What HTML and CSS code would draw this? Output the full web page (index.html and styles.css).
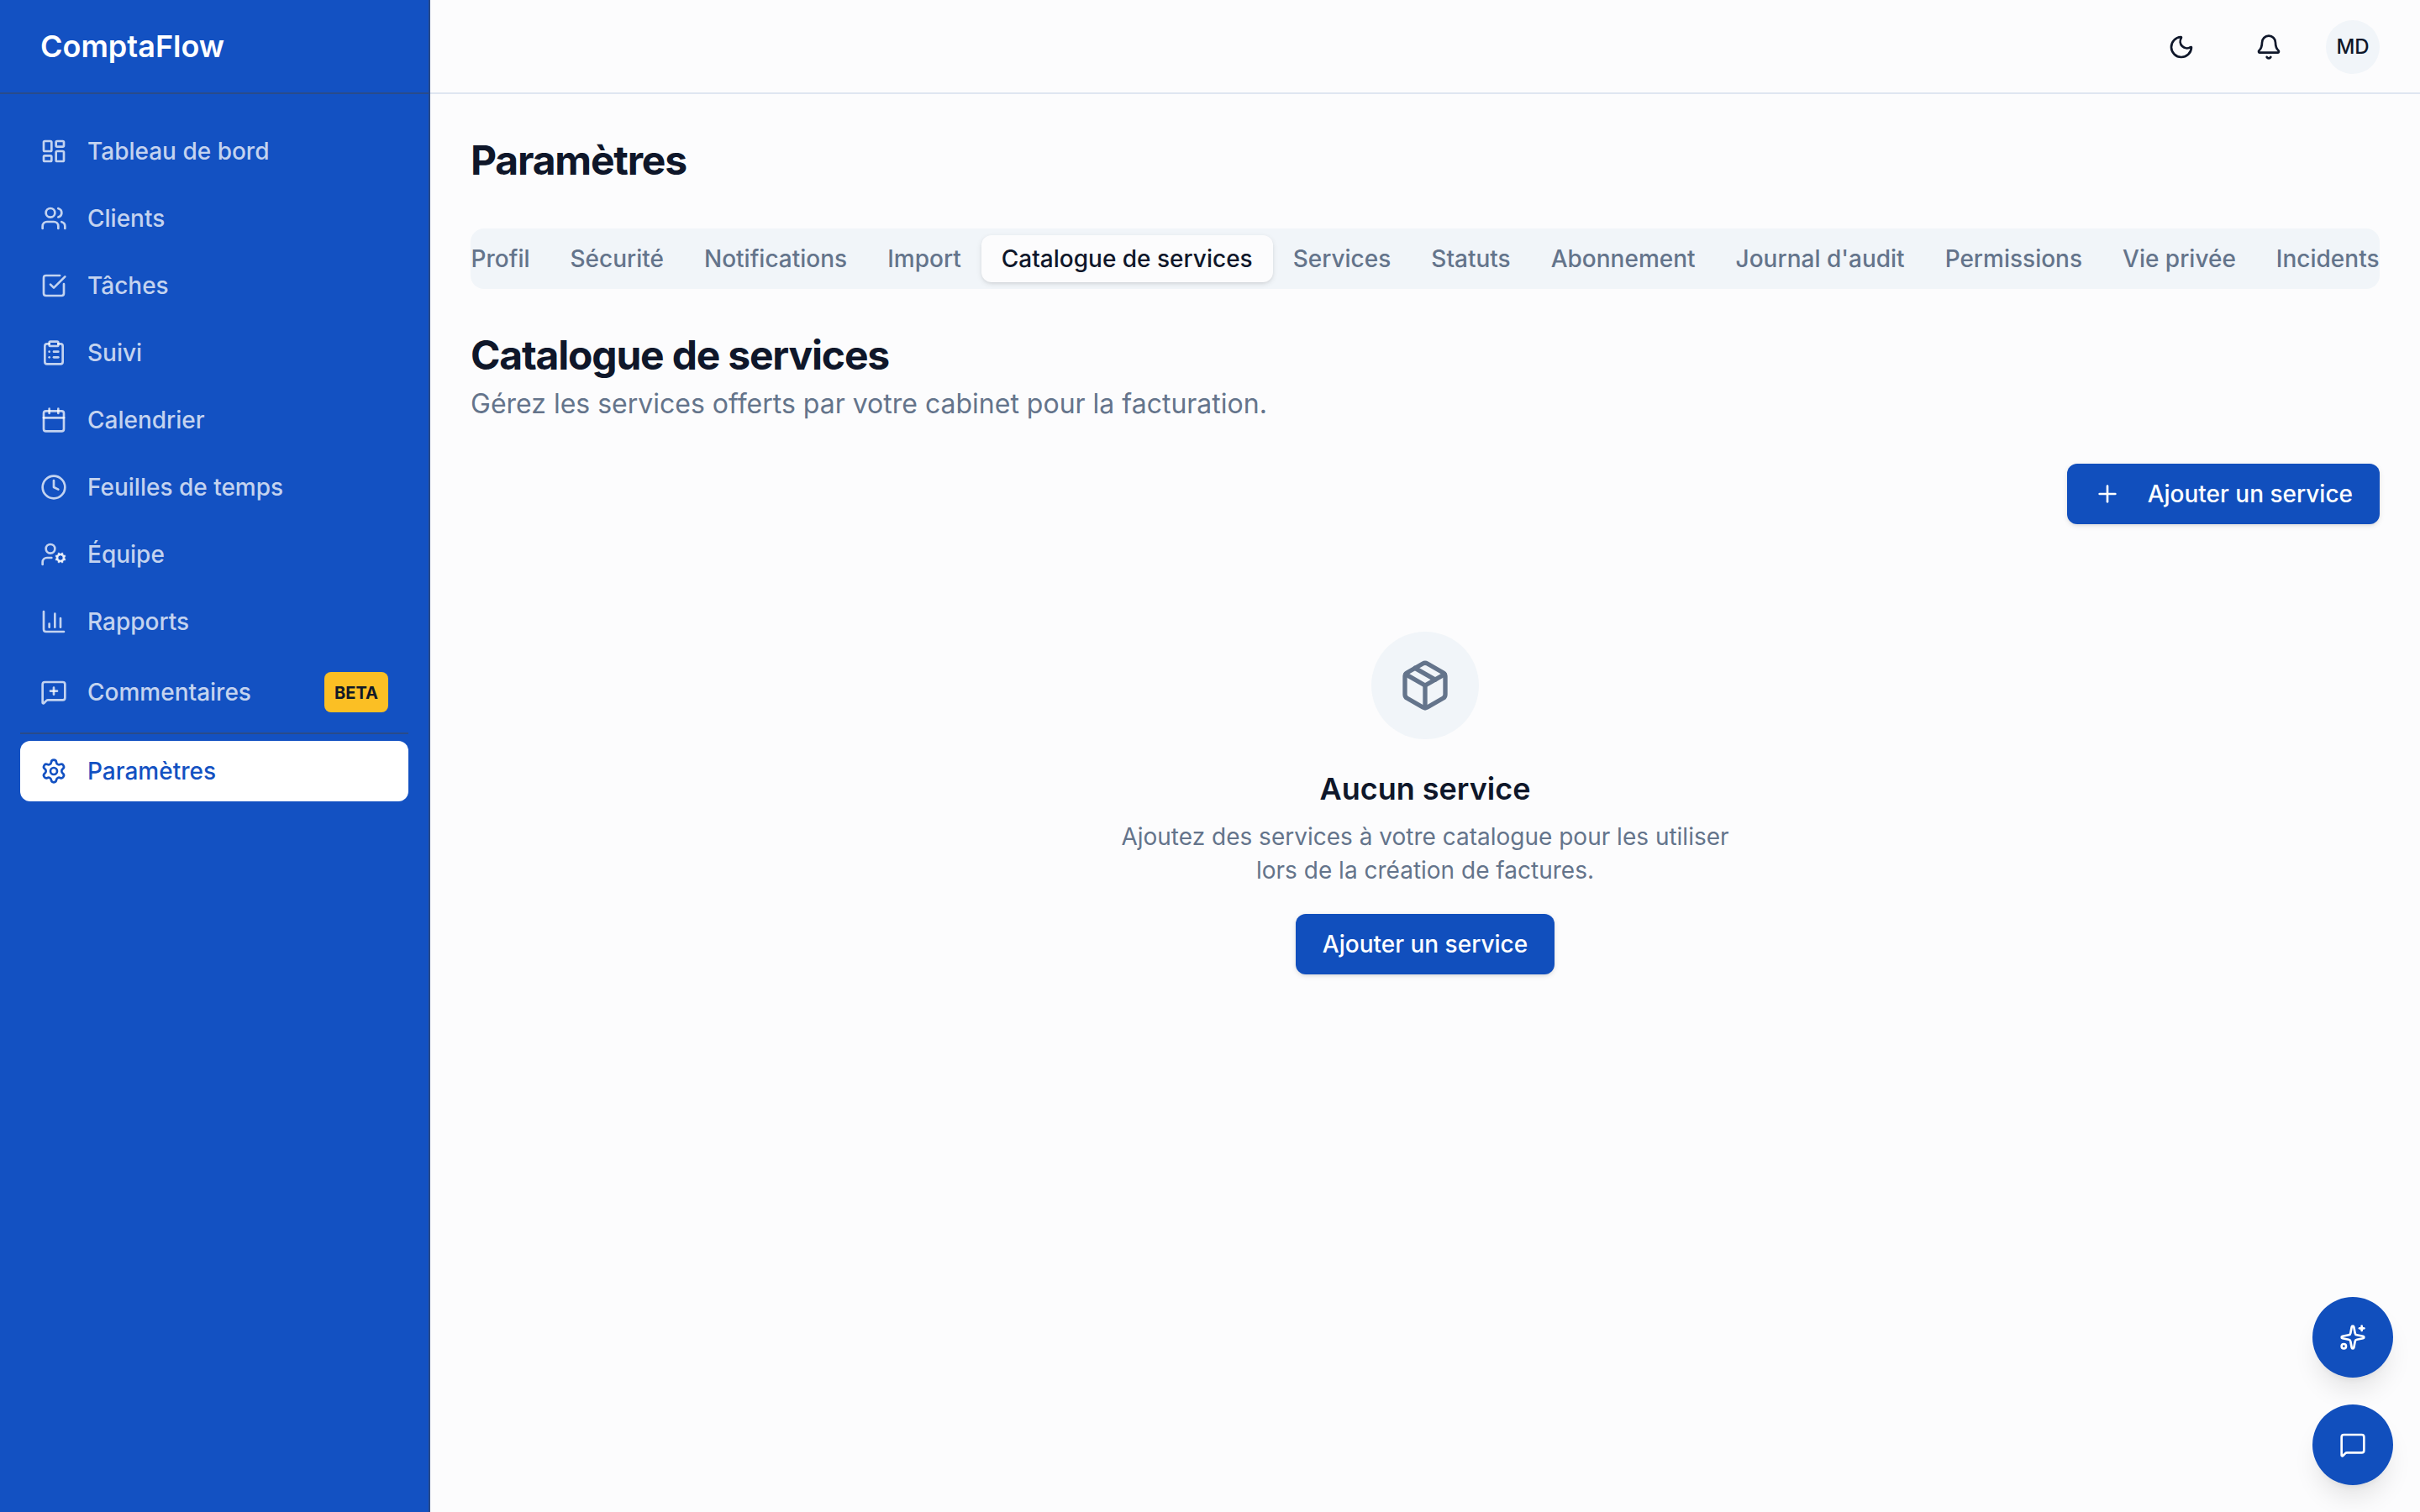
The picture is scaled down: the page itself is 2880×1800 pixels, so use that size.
FILE: index.html
```html
<!DOCTYPE html>
<html lang="fr">
<head>
  <meta charset="UTF-8" />
  <meta name="viewport" content="width=device-width, initial-scale=1" />
  <title>Paramètres - ComptaFlow</title>
  <link rel="stylesheet" href="styles.css">
</head>
<body>
  <div class="app">
    <aside class="sidebar">
      <div class="brand">ComptaFlow</div>
      <nav class="nav">
        <a class="nav-item">
          <svg class="icon" viewBox="0 0 24 24"><rect width="7" height="9" x="3" y="3" rx="1"/><rect width="7" height="5" x="14" y="3" rx="1"/><rect width="7" height="9" x="14" y="12" rx="1"/><rect width="7" height="5" x="3" y="16" rx="1"/></svg>
          <span>Tableau de bord</span>
        </a>
        <a class="nav-item">
          <svg class="icon" viewBox="0 0 24 24"><path d="M16 21v-2a4 4 0 0 0-4-4H6a4 4 0 0 0-4 4v2"/><path d="M16 3.128a4 4 0 0 1 0 7.744"/><path d="M22 21v-2a4 4 0 0 0-3-3.87"/><circle cx="9" cy="7" r="4"/></svg>
          <span>Clients</span>
        </a>
        <a class="nav-item">
          <svg class="icon" viewBox="0 0 24 24"><path d="M21 10.656V19a2 2 0 0 1-2 2H5a2 2 0 0 1-2-2V5a2 2 0 0 1 2-2h12.344"/><path d="m9 11 3 3L22 4"/></svg>
          <span>Tâches</span>
        </a>
        <a class="nav-item">
          <svg class="icon" viewBox="0 0 24 24"><rect width="8" height="4" x="8" y="2" rx="1"/><path d="M16 4h2a2 2 0 0 1 2 2v14a2 2 0 0 1-2 2H6a2 2 0 0 1-2-2V6a2 2 0 0 1 2-2h2"/><path d="M12 11h4"/><path d="M12 16h4"/><path d="M8 11h.01"/><path d="M8 16h.01"/></svg>
          <span>Suivi</span>
        </a>
        <a class="nav-item">
          <svg class="icon" viewBox="0 0 24 24"><path d="M8 2v4"/><path d="M16 2v4"/><rect width="18" height="18" x="3" y="4" rx="2"/><path d="M3 10h18"/></svg>
          <span>Calendrier</span>
        </a>
        <a class="nav-item">
          <svg class="icon" viewBox="0 0 24 24"><path d="M12 6v6l4 2"/><circle cx="12" cy="12" r="10"/></svg>
          <span>Feuilles de temps</span>
        </a>
        <a class="nav-item">
          <svg class="icon" viewBox="0 0 24 24"><path d="M10 15H6a4 4 0 0 0-4 4v2"/><path d="m14.305 16.53.923-.382"/><path d="m15.228 13.852-.923-.383"/><path d="m16.852 12.228-.383-.923"/><path d="m16.852 17.772-.383.924"/><path d="m19.148 12.228.383-.923"/><path d="m19.53 18.696-.382-.924"/><path d="m20.772 13.852.924-.383"/><path d="m20.772 16.148.924.383"/><circle cx="18" cy="15" r="3"/><circle cx="9" cy="7" r="4"/></svg>
          <span>Équipe</span>
        </a>
        <a class="nav-item">
          <svg class="icon" viewBox="0 0 24 24"><path d="M3 3v16a2 2 0 0 0 2 2h16"/><path d="M18 17V9"/><path d="M13 17V5"/><path d="M8 17v-3"/></svg>
          <span>Rapports</span>
        </a>
        <a class="nav-item">
          <svg class="icon" viewBox="0 0 24 24"><path d="M22 17a2 2 0 0 1-2 2H6.828a2 2 0 0 0-1.414.586l-2.202 2.202A.71.71 0 0 1 2 21.286V5a2 2 0 0 1 2-2h16a2 2 0 0 1 2 2z"/><path d="M12 8v6"/><path d="M9 11h6"/></svg>
          <span>Commentaires</span>
          <span class="badge">BETA</span>
        </a>
        <div class="nav-footer">
          <a class="nav-item active">
            <svg class="icon" viewBox="0 0 24 24"><path d="M9.671 4.136a2.34 2.34 0 0 1 4.659 0 2.34 2.34 0 0 0 3.319 1.915 2.34 2.34 0 0 1 2.33 4.033 2.34 2.34 0 0 0 0 3.831 2.34 2.34 0 0 1-2.33 4.033 2.34 2.34 0 0 0-3.319 1.915 2.34 2.34 0 0 1-4.659 0 2.34 2.34 0 0 0-3.32-1.915 2.34 2.34 0 0 1-2.33-4.033 2.34 2.34 0 0 0 0-3.831A2.34 2.34 0 0 1 6.35 6.051a2.34 2.34 0 0 0 3.319-1.915"/><circle cx="12" cy="12" r="3"/></svg>
            <span>Paramètres</span>
          </a>
        </div>
      </nav>
    </aside>

    <div class="page">
      <header class="topbar">
        <button class="icon-btn" aria-label="Thème">
          <svg class="icon" viewBox="0 0 24 24"><path d="M20.985 12.486a9 9 0 1 1-9.473-9.472c.405-.022.617.46.402.803a6 6 0 0 0 8.268 8.268c.344-.215.825-.004.803.401"/></svg>
        </button>
        <button class="icon-btn" aria-label="Notifications">
          <svg class="icon" viewBox="0 0 24 24"><path d="M10.268 21a2 2 0 0 0 3.464 0"/><path d="M3.262 15.326A1 1 0 0 0 4 17h16a1 1 0 0 0 .74-1.673C19.41 13.956 18 12.499 18 8A6 6 0 0 0 6 8c0 4.499-1.411 5.956-2.738 7.326"/></svg>
        </button>
        <div class="avatar">MD</div>
      </header>

      <main class="content">
        <h1>Paramètres</h1>

        <div class="tabs">
          <button class="tab">Profil</button>
          <button class="tab">Sécurité</button>
          <button class="tab">Notifications</button>
          <button class="tab">Import</button>
          <button class="tab active">Catalogue de services</button>
          <button class="tab">Services</button>
          <button class="tab">Statuts</button>
          <button class="tab">Abonnement</button>
          <button class="tab">Journal d'audit</button>
          <button class="tab">Permissions</button>
          <button class="tab">Vie privée</button>
          <button class="tab">Incidents</button>
        </div>

        <section>
          <h2>Catalogue de services</h2>
          <p class="subtitle">Gérez les services offerts par votre cabinet pour la facturation.</p>
        </section>

        <div class="actions">
          <button class="btn">
            <svg class="icon" viewBox="0 0 24 24"><path d="M5 12h14"/><path d="M12 5v14"/></svg>
            Ajouter un service
          </button>
        </div>

        <div class="empty">
          <div class="empty-icon">
            <svg class="icon" viewBox="0 0 24 24"><path d="M11 21.73a2 2 0 0 0 2 0l7-4A2 2 0 0 0 21 16V8a2 2 0 0 0-1-1.73l-7-4a2 2 0 0 0-2 0l-7 4A2 2 0 0 0 3 8v8a2 2 0 0 0 1 1.73z"/><path d="M12 22V12"/><path d="M3.29 7 12 12l8.71-5"/><path d="m7.5 4.27 9 5.15"/></svg>
          </div>
          <h3>Aucun service</h3>
          <p>Ajoutez des services à votre catalogue pour les utiliser lors de la création de factures.</p>
          <button class="btn">Ajouter un service</button>
        </div>
      </main>
    </div>
  </div>

  <!-- Floating actions -->
  <div class="fabs">
    <button class="fab" aria-label="Assistant">
      <svg class="icon" viewBox="0 0 24 24"><path d="M11.017 2.814a1 1 0 0 1 1.966 0l1.051 5.558a2 2 0 0 0 1.594 1.594l5.558 1.051a1 1 0 0 1 0 1.966l-5.558 1.051a2 2 0 0 0-1.594 1.594l-1.051 5.558a1 1 0 0 1-1.966 0l-1.051-5.558a2 2 0 0 0-1.594-1.594l-5.558-1.051a1 1 0 0 1 0-1.966l5.558-1.051a2 2 0 0 0 1.594-1.594z"/><path d="M20 2v4"/><path d="M22 4h-4"/><circle cx="4" cy="20" r="2"/></svg>
    </button>
    <button class="fab" aria-label="Messages">
      <svg class="icon" viewBox="0 0 24 24"><path d="M22 17a2 2 0 0 1-2 2H6.828a2 2 0 0 0-1.414.586l-2.202 2.202A.71.71 0 0 1 2 21.286V5a2 2 0 0 1 2-2h16a2 2 0 0 1 2 2z"/></svg>
    </button>
  </div>
</body>
</html>
```
FILE: styles.css
```css
* {
  margin: 0;
  padding: 0;
  box-sizing: border-box;
}
:root {
  --primary: #114fbd;
  --sidebar: #1351c2;
  --sidebar-border: #294b8a;
  --background: #fcfcfd;
  --foreground: #0f172a;
  --muted: #f1f5f9;
  --muted-text: #64748b;
  --border: #dfe6f1;
}
body {
  font-family: 'Inter', sans-serif;
  font-size: 28px;
  line-height: 40px;
  background: var(--background);
  color: var(--foreground);
}
button {
  font: inherit;
  color: inherit;
  background: none;
  border: none;
  cursor: pointer;
}
.icon {
  width: 32px;
  height: 32px;
  flex-shrink: 0;
  fill: none;
  stroke: currentColor;
  stroke-width: 2;
  stroke-linecap: round;
  stroke-linejoin: round;
}
.app {
  display: flex;
  height: 100vh;
}

/* Sidebar */
.sidebar {
  width: 512px;
  flex-shrink: 0;
  background: var(--sidebar);
  border-right: 2px solid var(--sidebar-border);
}
.brand {
  height: 112px;
  padding: 0 48px;
  display: flex;
  align-items: center;
  border-bottom: 2px solid var(--sidebar-border);
  color: #fff;
  font-size: 36px;
  font-weight: 600;
}
.nav {
  display: flex;
  flex-direction: column;
  gap: 8px;
  padding: 32px 24px;
}
.nav-item {
  display: flex;
  align-items: center;
  gap: 24px;
  padding: 16px 24px;
  border-radius: 12px;
  font-weight: 500;
  color: rgba(255, 255, 255, 0.75);
}
.nav-item.active {
  background: #fff;
  color: var(--sidebar);
}
.nav-footer {
  border-top: 2px solid var(--sidebar-border);
  padding-top: 8px;
}
.badge {
  margin-left: auto;
  padding: 5px 12px 3px;
  border-radius: 8px;
  background: #fbbf24;
  color: #111827;
  font-size: 20px;
  font-weight: 700;
}

/* Top bar */
.page {
  flex: 1;
  min-width: 0;
}
.topbar {
  height: 112px;
  padding: 2px 48px 0;
  display: flex;
  align-items: center;
  justify-content: flex-end;
  gap: 32px;
  border-bottom: 2px solid var(--border);
}
.icon-btn {
  width: 72px;
  height: 72px;
  display: flex;
  align-items: center;
  justify-content: center;
}
.avatar {
  width: 64px;
  height: 64px;
  display: flex;
  align-items: center;
  justify-content: center;
  border-radius: 50%;
  background: var(--muted);
  font-size: 24px;
  font-weight: 500;
}

/* Content */
.content {
  display: flex;
  flex-direction: column;
  gap: 48px;
  padding: 48px;
}
h1,
h2 {
  font-size: 48px;
  line-height: 61px;
  font-weight: 700;
  letter-spacing: -0.025em;
}
h1 {
  margin-bottom: 3px;
}
h2 {
  margin-bottom: 4px;
}
.subtitle {
  font-size: 32px;
  line-height: 47px;
  color: var(--muted-text);
}
.tabs {
  height: 72px;
  padding: 8px;
  display: flex;
  justify-content: center;
  overflow: hidden;
  border-radius: 16px;
  background: var(--muted);
}
.tab {
  flex-shrink: 0;
  padding: 8px 24px;
  border-radius: 12px;
  font-weight: 500;
  white-space: nowrap;
  color: var(--muted-text);
}
.tab.active {
  background: var(--background);
  color: var(--foreground);
  box-shadow: 0 2px 6px rgba(0, 0, 0, 0.1), 0 2px 4px -2px rgba(0, 0, 0, 0.1);
}
.actions {
  display: flex;
  justify-content: flex-end;
}
.btn {
  height: 72px;
  padding: 0 32px;
  display: inline-flex;
  align-items: center;
  gap: 32px;
  border-radius: 12px;
  background: var(--primary);
  color: #fff;
  font-weight: 500;
  box-shadow: 0 2px 6px rgba(0, 0, 0, 0.1), 0 2px 4px -2px rgba(0, 0, 0, 0.1);
}

/* Empty state */
.empty {
  display: flex;
  flex-direction: column;
  align-items: center;
  padding: 80px 0;
  text-align: center;
}
.empty-icon {
  width: 128px;
  height: 128px;
  margin-bottom: 32px;
  display: flex;
  align-items: center;
  justify-content: center;
  border-radius: 50%;
  background: var(--muted);
  color: var(--muted-text);
}
.empty-icon .icon {
  width: 64px;
  height: 64px;
}
.empty h3 {
  margin-bottom: 10px;
  font-size: 36px;
  line-height: 54px;
  font-weight: 600;
}
.empty p {
  max-width: 768px;
  margin-bottom: 32px;
  color: var(--muted-text);
}

/* Floating buttons */
.fabs {
  position: fixed;
  right: 32px;
  bottom: 32px;
  display: flex;
  flex-direction: column;
  gap: 32px;
}
.fab {
  width: 96px;
  height: 96px;
  display: flex;
  align-items: center;
  justify-content: center;
  border-radius: 50%;
  background: var(--primary);
  color: #fff;
  box-shadow: 0 20px 30px -6px rgba(0, 0, 0, 0.1), 0 8px 12px -8px rgba(0, 0, 0, 0.1);
}
```
